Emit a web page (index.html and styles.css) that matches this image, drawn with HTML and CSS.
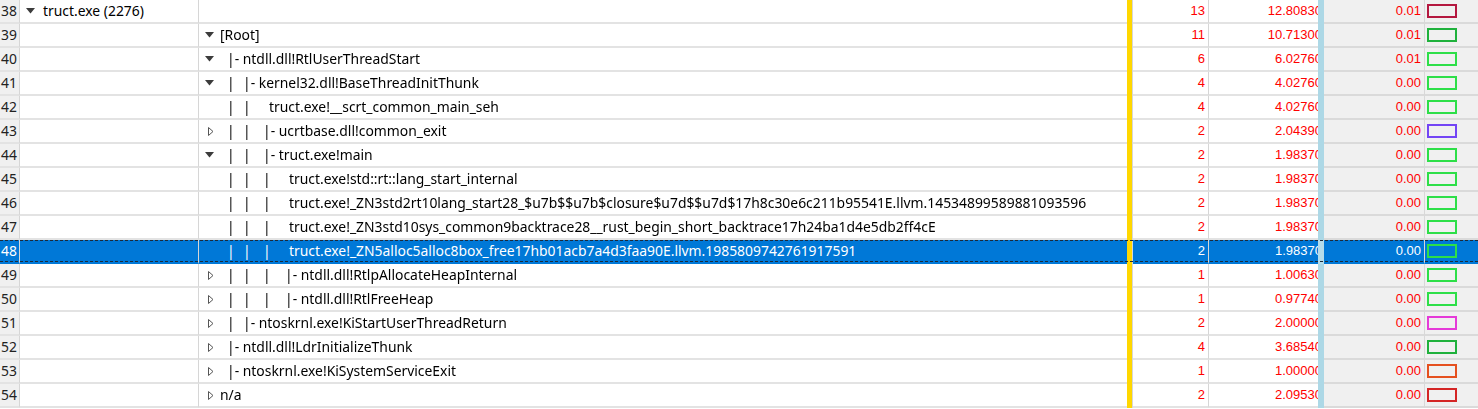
FILE: index.html
```html
<!DOCTYPE html>
<html>
<head>
<meta charset="utf-8">
<link rel="stylesheet" href="styles.css">
</head>
<body>
<div class="table">
  <div class="row">
    <div class="c ln">38</div>
    <div class="c proc"><span class="tri"><svg width="9" height="6" viewBox="0 0 9 6"><path d="M0 0H9L4.5 5.5Z" fill="#3c3c3c"/></svg></span>truct.exe (2276)</div>
    <div class="c stack"></div>
    <div class="bar-y"></div>
    <div class="c cnt">13</div>
    <div class="c wt"><span>12.80830</span></div>
    <div class="bar-b"></div>
    <div class="c pct">0.01</div>
    <div class="c sw"><span class="box" style="border-color:#b4173f"></span></div>
  </div>
  <div class="row">
    <div class="c ln">39</div>
    <div class="c proc"></div>
    <div class="c stack"><span class="tri"><svg width="9" height="6" viewBox="0 0 9 6"><path d="M0 0H9L4.5 5.5Z" fill="#3c3c3c"/></svg></span>[Root]</div>
    <div class="bar-y"></div>
    <div class="c cnt">11</div>
    <div class="c wt"><span>10.71300</span></div>
    <div class="bar-b"></div>
    <div class="c pct">0.01</div>
    <div class="c sw"><span class="box" style="border-color:#1fb13c"></span></div>
  </div>
  <div class="row">
    <div class="c ln">40</div>
    <div class="c proc"></div>
    <div class="c stack"><span class="tri"><svg width="9" height="6" viewBox="0 0 9 6"><path d="M0 0H9L4.5 5.5Z" fill="#3c3c3c"/></svg></span><span class="lead"></span>|- ntdll.dll!RtlUserThreadStart</div>
    <div class="bar-y"></div>
    <div class="c cnt">6</div>
    <div class="c wt"><span>6.02760</span></div>
    <div class="bar-b"></div>
    <div class="c pct">0.01</div>
    <div class="c sw"><span class="box" style="border-color:#2ddf48"></span></div>
  </div>
  <div class="row">
    <div class="c ln">41</div>
    <div class="c proc"></div>
    <div class="c stack"><span class="tri"><svg width="9" height="6" viewBox="0 0 9 6"><path d="M0 0H9L4.5 5.5Z" fill="#3c3c3c"/></svg></span><span class="lead"></span><span class="g g0">|</span>|- kernel32.dll!BaseThreadInitThunk</div>
    <div class="bar-y"></div>
    <div class="c cnt">4</div>
    <div class="c wt"><span>4.02760</span></div>
    <div class="bar-b"></div>
    <div class="c pct">0.00</div>
    <div class="c sw"><span class="box" style="border-color:#2ddf48"></span></div>
  </div>
  <div class="row">
    <div class="c ln">42</div>
    <div class="c proc"></div>
    <div class="c stack"><span class="tri"></span><span class="lead"></span><span class="g g0">|</span><span class="g g1">|</span><span class="leaf">truct.exe!__scrt_common_main_seh</span></div>
    <div class="bar-y"></div>
    <div class="c cnt">4</div>
    <div class="c wt"><span>4.02760</span></div>
    <div class="bar-b"></div>
    <div class="c pct">0.00</div>
    <div class="c sw"><span class="box" style="border-color:#2ddf48"></span></div>
  </div>
  <div class="row">
    <div class="c ln">43</div>
    <div class="c proc"></div>
    <div class="c stack"><span class="tri"><svg width="9" height="11" viewBox="0 0 9 11"><path d="M3.5 1.5L8 5.5L3.5 9.5Z" fill="#fff" stroke="#555" stroke-width="1"/></svg></span><span class="lead"></span><span class="g g0">|</span><span class="g g1">|</span>|- ucrtbase.dll!common_exit</div>
    <div class="bar-y"></div>
    <div class="c cnt">2</div>
    <div class="c wt"><span>2.04390</span></div>
    <div class="bar-b"></div>
    <div class="c pct">0.00</div>
    <div class="c sw"><span class="box" style="border-color:#7345f5"></span></div>
  </div>
  <div class="row">
    <div class="c ln">44</div>
    <div class="c proc"></div>
    <div class="c stack"><span class="tri"><svg width="9" height="6" viewBox="0 0 9 6"><path d="M0 0H9L4.5 5.5Z" fill="#3c3c3c"/></svg></span><span class="lead"></span><span class="g g0">|</span><span class="g g1">|</span>|- truct.exe!main</div>
    <div class="bar-y"></div>
    <div class="c cnt">2</div>
    <div class="c wt"><span>1.98370</span></div>
    <div class="bar-b"></div>
    <div class="c pct">0.00</div>
    <div class="c sw"><span class="box" style="border-color:#2ddf48"></span></div>
  </div>
  <div class="row">
    <div class="c ln">45</div>
    <div class="c proc"></div>
    <div class="c stack"><span class="tri"></span><span class="lead"></span><span class="g g0">|</span><span class="g g1">|</span><span class="g g2">|</span><span class="leaf2">truct.exe!std::rt::lang_start_internal</span></div>
    <div class="bar-y"></div>
    <div class="c cnt">2</div>
    <div class="c wt"><span>1.98370</span></div>
    <div class="bar-b"></div>
    <div class="c pct">0.00</div>
    <div class="c sw"><span class="box" style="border-color:#2ddf48"></span></div>
  </div>
  <div class="row">
    <div class="c ln">46</div>
    <div class="c proc"></div>
    <div class="c stack"><span class="tri"></span><span class="lead"></span><span class="g g0">|</span><span class="g g1">|</span><span class="g g2">|</span><span class="leaf2">truct.exe!_ZN3std2rt10lang_start28_$u7b$$u7b$closure$u7d$$u7d$17h8c30e6c211b95541E.llvm.14534899589881093596</span></div>
    <div class="bar-y"></div>
    <div class="c cnt">2</div>
    <div class="c wt"><span>1.98370</span></div>
    <div class="bar-b"></div>
    <div class="c pct">0.00</div>
    <div class="c sw"><span class="box" style="border-color:#2ddf48"></span></div>
  </div>
  <div class="row">
    <div class="c ln">47</div>
    <div class="c proc"></div>
    <div class="c stack"><span class="tri"></span><span class="lead"></span><span class="g g0">|</span><span class="g g1">|</span><span class="g g2">|</span><span class="leaf2">truct.exe!_ZN3std10sys_common9backtrace28__rust_begin_short_backtrace17h24ba1d4e5db2ff4cE</span></div>
    <div class="bar-y"></div>
    <div class="c cnt">2</div>
    <div class="c wt"><span>1.98370</span></div>
    <div class="bar-b"></div>
    <div class="c pct">0.00</div>
    <div class="c sw"><span class="box" style="border-color:#2ddf48"></span></div>
  </div>
  <div class="row sel">
    <div class="c ln">48</div>
    <div class="c proc"></div>
    <div class="c stack"><span class="tri"></span><span class="lead"></span><span class="g g0">|</span><span class="g g1">|</span><span class="g g2">|</span><span class="leaf2">truct.exe!_ZN5alloc5alloc8box_free17hb01acb7a4d3faa90E.llvm.1985809742761917591</span></div>
    <div class="bar-y"></div>
    <div class="c cnt">2</div>
    <div class="c wt"><span>1.98370</span></div>
    <div class="bar-b"></div>
    <div class="c pct">0.00</div>
    <div class="c sw"><span class="box" style="border-color:#2ddf48"></span></div>
  </div>
  <div class="row">
    <div class="c ln">49</div>
    <div class="c proc"></div>
    <div class="c stack"><span class="tri"><svg width="9" height="11" viewBox="0 0 9 11"><path d="M3.5 1.5L8 5.5L3.5 9.5Z" fill="#fff" stroke="#555" stroke-width="1"/></svg></span><span class="lead"></span><span class="g g0">|</span><span class="g g1">|</span><span class="g g2">|</span>|- ntdll.dll!RtlpAllocateHeapInternal</div>
    <div class="bar-y"></div>
    <div class="c cnt">1</div>
    <div class="c wt"><span>1.00630</span></div>
    <div class="bar-b"></div>
    <div class="c pct">0.00</div>
    <div class="c sw"><span class="box" style="border-color:#2ddf48"></span></div>
  </div>
  <div class="row">
    <div class="c ln">50</div>
    <div class="c proc"></div>
    <div class="c stack"><span class="tri"><svg width="9" height="11" viewBox="0 0 9 11"><path d="M3.5 1.5L8 5.5L3.5 9.5Z" fill="#fff" stroke="#555" stroke-width="1"/></svg></span><span class="lead"></span><span class="g g0">|</span><span class="g g1">|</span><span class="g g2">|</span>|- ntdll.dll!RtlFreeHeap</div>
    <div class="bar-y"></div>
    <div class="c cnt">1</div>
    <div class="c wt"><span>0.97740</span></div>
    <div class="bar-b"></div>
    <div class="c pct">0.00</div>
    <div class="c sw"><span class="box" style="border-color:#2ddf48"></span></div>
  </div>
  <div class="row">
    <div class="c ln">51</div>
    <div class="c proc"></div>
    <div class="c stack"><span class="tri"><svg width="9" height="11" viewBox="0 0 9 11"><path d="M3.5 1.5L8 5.5L3.5 9.5Z" fill="#fff" stroke="#555" stroke-width="1"/></svg></span><span class="lead"></span><span class="g g0">|</span>|- ntoskrnl.exe!KiStartUserThreadReturn</div>
    <div class="bar-y"></div>
    <div class="c cnt">2</div>
    <div class="c wt"><span>2.00000</span></div>
    <div class="bar-b"></div>
    <div class="c pct">0.00</div>
    <div class="c sw"><span class="box" style="border-color:#e53ad8"></span></div>
  </div>
  <div class="row">
    <div class="c ln">52</div>
    <div class="c proc"></div>
    <div class="c stack"><span class="tri"><svg width="9" height="11" viewBox="0 0 9 11"><path d="M3.5 1.5L8 5.5L3.5 9.5Z" fill="#fff" stroke="#555" stroke-width="1"/></svg></span><span class="lead"></span>|- ntdll.dll!LdrInitializeThunk</div>
    <div class="bar-y"></div>
    <div class="c cnt">4</div>
    <div class="c wt"><span>3.68540</span></div>
    <div class="bar-b"></div>
    <div class="c pct">0.00</div>
    <div class="c sw"><span class="box" style="border-color:#1fb13c"></span></div>
  </div>
  <div class="row">
    <div class="c ln">53</div>
    <div class="c proc"></div>
    <div class="c stack"><span class="tri"><svg width="9" height="11" viewBox="0 0 9 11"><path d="M3.5 1.5L8 5.5L3.5 9.5Z" fill="#fff" stroke="#555" stroke-width="1"/></svg></span><span class="lead"></span>|- ntoskrnl.exe!KiSystemServiceExit</div>
    <div class="bar-y"></div>
    <div class="c cnt">1</div>
    <div class="c wt"><span>1.00000</span></div>
    <div class="bar-b"></div>
    <div class="c pct">0.00</div>
    <div class="c sw"><span class="box" style="border-color:#e5501f"></span></div>
  </div>
  <div class="row">
    <div class="c ln">54</div>
    <div class="c proc"></div>
    <div class="c stack"><span class="tri"><svg width="9" height="11" viewBox="0 0 9 11"><path d="M3.5 1.5L8 5.5L3.5 9.5Z" fill="#fff" stroke="#555" stroke-width="1"/></svg></span>n/a</div>
    <div class="bar-y"></div>
    <div class="c cnt">2</div>
    <div class="c wt"><span>2.09530</span></div>
    <div class="bar-b"></div>
    <div class="c pct">0.00</div>
    <div class="c sw"><span class="box" style="border-color:#d42525"></span></div>
  </div>
</div>
</body>
</html>
```

FILE: styles.css
```css
html, body {
  margin: 0;
  padding: 0;
  background: #ffffff;
}
body {
  width: 1478px;
  height: 409px;
  overflow: hidden;
  font-family: "Noto Sans", "Open Sans", sans-serif;
  font-size: 13.9px;
  color: #000;
}
.table {
  display: flex;
  flex-direction: column;
  background: #fff;
}
.row {
  display: flex;
  height: 24px;
  position: relative;
}
.c {
  box-sizing: border-box;
  height: 24px;
  line-height: 22px;
  border-bottom: 2px solid #e3e3e3;
  white-space: pre;
  overflow: hidden;
  display: flex;
  align-items: center;
}
.ln {
  width: 20px;
  background: #f0f0f0;
  border-right: 1px solid #d6d6d6;
  padding-left: 1px;
  color: #222;
}
.proc {
  width: 179px;
  border-right: 1px solid #d6d6d6;
  padding-left: 6px;
}
.proc .tri {
  width: 17px;
}
.stack {
  width: 928px;
  padding-left: 6px;
}
.row:not(.sel) .stack {
  filter: grayscale(1);
}
.tri {
  display: inline-flex;
  align-items: center;
  width: 15px;
  height: 22px;
  flex: none;
}
.tri svg {
  display: block;
}
.lead {
  display: inline-block;
  width: 7px;
  flex: none;
}
.g {
  display: inline-block;
  flex: none;
}
.g0 { width: 16px; }
.g1 { width: 20px; }
.g2 { width: 22px; }
.leaf { padding-left: 6px; }
.leaf2 { padding-left: 4px; }
.bar-y {
  width: 5px;
  height: 24px;
  background: #ffd700;
  border-right: 1px solid #d6d6d6;
  flex: none;
}
.cnt {
  width: 76px;
  justify-content: flex-end;
  padding-right: 3px;
  border-right: 1px solid #d6d6d6;
  color: #ff0000;
  font-family: "Liberation Sans", Arial, sans-serif;
  font-size: 13px;
}
.wt {
  width: 109px;
  justify-content: flex-end;
  color: #ff0000;
  font-family: "Liberation Sans", Arial, sans-serif;
  font-size: 13px;
}
.wt span {
  margin-right: -4px;
}
.bar-b {
  width: 6px;
  height: 24px;
  background: #add8e6;
  flex: none;
}
.pct {
  width: 101px;
  background: #f0f0f0;
  border-bottom-color: #dadada;
  border-right: 1px solid #d8d8d8;
  justify-content: flex-end;
  padding-right: 3px;
  color: #ff0000;
  font-family: "Liberation Sans", Arial, sans-serif;
  font-size: 13px;
}
.sw {
  width: 53px;
  background: #f0f0f0;
  border-bottom-color: #dadada;
  padding-left: 2px;
}
.box {
  display: block;
  box-sizing: border-box;
  width: 30px;
  height: 14px;
  border: 2px solid #2ddf48;
}
.sel .c {
  background: #0078d7;
  color: #fff;
  border-bottom-color: #0078d7;
}
.sel .bar-b {
  background: #b5dcea;
}
.sel::after {
  content: "";
  position: absolute;
  left: 0;
  right: 0;
  top: 0;
  height: 22px;
  box-sizing: border-box;
  border-top: 1px dashed #1c2a3a;
  border-bottom: 1px dashed #1c2a3a;
  pointer-events: none;
}
```
